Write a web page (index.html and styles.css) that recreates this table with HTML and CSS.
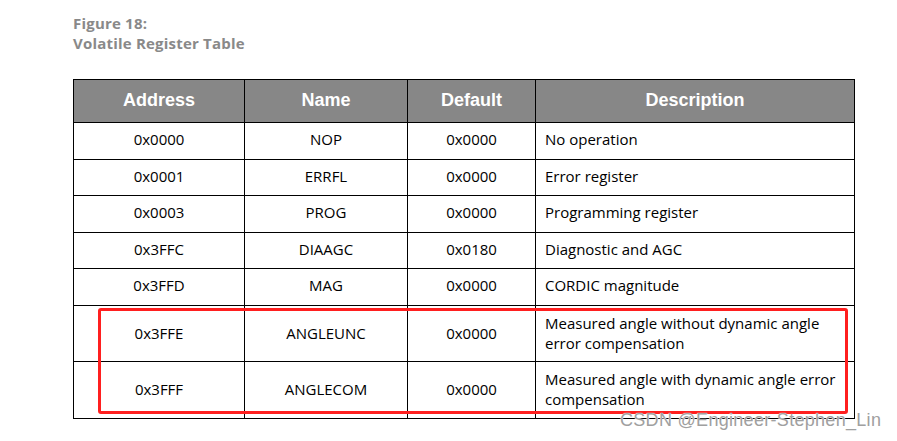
FILE: index.html
```html
<!DOCTYPE html>
<html>
<head>
<meta charset="utf-8">
<link rel="stylesheet" href="styles.css">
</head>
<body>
<div class="page">
  <div class="caption">
    <div>Figure 18:</div>
    <div>Volatile Register Table</div>
  </div>
  <table class="regs">
    <colgroup>
      <col class="c-addr"><col class="c-name"><col class="c-def"><col class="c-desc">
    </colgroup>
    <thead>
      <tr><th>Address</th><th>Name</th><th>Default</th><th>Description</th></tr>
    </thead>
    <tbody>
      <tr><td>0x0000</td><td>NOP</td><td>0x0000</td><td class="desc">No operation</td></tr>
      <tr><td>0x0001</td><td>ERRFL</td><td>0x0000</td><td class="desc">Error register</td></tr>
      <tr><td>0x0003</td><td>PROG</td><td>0x0000</td><td class="desc">Programming register</td></tr>
      <tr><td>0x3FFC</td><td>DIAAGC</td><td>0x0180</td><td class="desc">Diagnostic and AGC</td></tr>
      <tr><td>0x3FFD</td><td>MAG</td><td>0x0000</td><td class="desc">CORDIC magnitude</td></tr>
      <tr class="tall"><td>0x3FFE</td><td>ANGLEUNC</td><td>0x0000</td><td class="desc">Measured angle without dynamic angle<br>error compensation</td></tr>
      <tr class="tall"><td>0x3FFF</td><td>ANGLECOM</td><td>0x0000</td><td class="desc">Measured angle with dynamic angle error<br>compensation</td></tr>
    </tbody>
  </table>
  <div class="highlight"></div>
  <div class="watermark">CSDN @Engineer-Stephen_Lin</div>
</div>
</body>
</html>
```
FILE: styles.css
```css
html, body {
  margin: 0;
  padding: 0;
  background: #ffffff;
}
.page {
  position: relative;
  width: 897px;
  height: 441px;
  padding: 13px 0 0 73px;
  box-sizing: border-box;
}
.caption {
  font-family: "Open Sans", "Noto Sans", sans-serif;
  font-weight: 700;
  font-size: 15px;
  line-height: 20px;
  letter-spacing: 0.2px;
  color: #898989;
}
.regs {
  margin-top: 26px;
  border-collapse: collapse;
  table-layout: fixed;
  width: 781px;
  font-family: "Open Sans", "Noto Sans", sans-serif;
  font-size: 15px;
  color: #000000;
}
.c-addr { width: 171px; }
.c-name { width: 163px; }
.c-def { width: 128px; }
.c-desc { width: 319px; }
.regs th, .regs td {
  border: 1px solid #000000;
  padding: 0;
  text-align: center;
  vertical-align: middle;
}
.regs th {
  background: #878787;
  color: #ffffff;
  font-family: "Liberation Sans", Arial, sans-serif;
  font-weight: 700;
  font-size: 18px;
  height: 40px;
  padding-bottom: 2px;
}
.regs td {
  height: 32.5px;
  padding-bottom: 3px;
  line-height: 20px;
}
.regs tr.tall td {
  height: 54.5px;
  padding-bottom: 1px;
}
.regs td.desc {
  text-align: left;
  padding-left: 9px;
}
.highlight {
  position: absolute;
  left: 98px;
  top: 308px;
  width: 750px;
  height: 106px;
  box-sizing: border-box;
  border: 3px solid #ff1f1f;
  border-radius: 3px;
}
.watermark {
  position: absolute;
  left: 620px;
  top: 410px;
  font-family: "Liberation Sans", Arial, sans-serif;
  font-size: 18px;
  color: #a0a0a0;
  text-shadow: 0 0 1px #ffffff, 0 0 1px #ffffff;
  letter-spacing: 0.3px;
}
```
